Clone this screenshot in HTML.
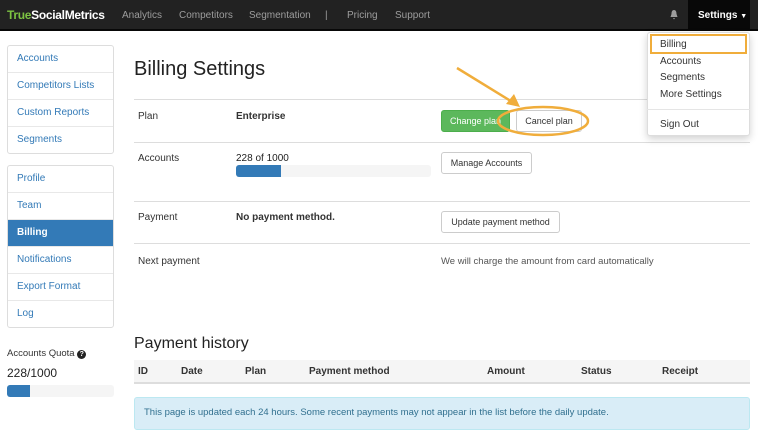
<!DOCTYPE html>
<html><head><meta charset="utf-8"><style>
*{margin:0;padding:0;box-sizing:border-box}
body{width:758px;height:437px;overflow:hidden;background:#fff;font-family:"Liberation Sans",Arial,sans-serif;font-size:10px;color:#333;position:relative}
.a{position:absolute;white-space:nowrap}
.nav{position:absolute;left:0;top:0;width:758px;height:31px;background:#222;border-bottom:2px solid #080808}
.nav .a{color:#9d9d9d;font-size:10px;top:10px}
.sb{position:absolute;left:7px;width:107px;border:1px solid #ddd;border-radius:3px;background:#fff}
.sb div{height:27px;line-height:26px;padding-left:9px;color:#337ab7;border-top:1px solid #e8e8e8;font-size:10px}
.sb div:first-child{border-top:none;height:26px}
.sb .act{background:#337ab7;color:#fff;font-weight:bold}
.hr{position:absolute;left:134px;width:616px;height:1px;background:#ddd}
.btn{position:absolute;height:22px;border:1px solid #ccc;border-radius:3px;background:#fff;display:flex;align-items:center;justify-content:center;white-space:nowrap;font-size:9px;color:#333}
.dd .a{color:#333;font-size:10px;left:660px}
.th{font-weight:bold;top:366px}
</style></head><body>
<div class="nav">
 <div class="a" style="left:7px;top:8px;font-size:12px;font-weight:bold;color:#fff;letter-spacing:-0.3px"><span style="color:#7cc242">True</span>SocialMetrics</div>
 <div class="a" style="left:122px">Analytics</div>
 <div class="a" style="left:179px">Competitors</div>
 <div class="a" style="left:249px">Segmentation</div>
 <div class="a" style="left:325px">|</div>
 <div class="a" style="left:347px">Pricing</div>
 <div class="a" style="left:395px">Support</div>
 <svg class="a" style="left:669px;top:9px" width="10" height="11" viewBox="0 0 10 11"><path d="M5 1C3 1 2.5 3 2.5 5L1.5 8H8.5L7.5 5C7.5 3 7 1 5 1Z M4 9H6L5 10.5Z" fill="#9d9d9d"/></svg>
 <div class="a" style="left:688px;top:0;width:62px;height:31px;background:#080808"></div>
 <div class="a" style="left:698px;top:10px;color:#fff;font-weight:bold">Settings <span style="font-size:7px">▼</span></div>
</div>

<div class="sb" style="top:45px"><div>Accounts</div><div>Competitors Lists</div><div>Custom Reports</div><div>Segments</div></div>
<div class="sb" style="top:165px"><div>Profile</div><div>Team</div><div class="act">Billing</div><div>Notifications</div><div>Export Format</div><div>Log</div></div>

<div class="a" style="left:7px;top:348px;font-size:9.5px">Accounts Quota <span style="display:inline-block;width:9px;height:9px;border-radius:50%;background:#222;color:#fff;font-size:7px;text-align:center;line-height:9px;font-weight:bold">?</span></div>
<div class="a" style="left:7px;top:366px;font-size:12px;color:#222">228/1000</div>
<div class="a" style="left:7px;top:385px;width:107px;height:12px;background:#f5f5f5;border-radius:3px"><div style="width:23px;height:12px;background:#337ab7;border-radius:3px 0 0 3px"></div></div>

<div class="a" style="left:134px;top:58px;font-size:20px;color:#222">Billing Settings</div>
<div class="hr" style="top:99px"></div>
<div class="a" style="left:138px;top:111px">Plan</div>
<div class="a" style="left:236px;top:111px;font-weight:bold">Enterprise</div>
<div class="btn" style="left:441px;top:110px;width:69px;background:#5cb85c;border-color:#4cae4c;color:#fff">Change plan</div>
<div class="btn" style="left:516px;top:110px;width:66px">Cancel plan</div>
<svg class="a" style="left:440px;top:60px" width="160" height="82" viewBox="0 0 160 82"><ellipse cx="103" cy="61" rx="45" ry="14" fill="none" stroke="#f0ad3b" stroke-width="2.5"/><path d="M17 8L74 43" stroke="#f0ad3b" stroke-width="2.5"/><path d="M80 47L66 44L74 34Z" fill="#f0ad3b"/></svg>
<div class="hr" style="top:142px"></div>
<div class="a" style="left:138px;top:153px">Accounts</div>
<div class="a" style="left:236px;top:153px;color:#222">228 of 1000</div>
<div class="a" style="left:236px;top:165px;width:195px;height:12px;background:#f5f5f5;border-radius:3px"><div style="width:45px;height:12px;background:#337ab7;border-radius:3px 0 0 3px"></div></div>
<div class="btn" style="left:441px;top:152px;width:91px">Manage Accounts</div>
<div class="hr" style="top:201px"></div>
<div class="a" style="left:138px;top:212px">Payment</div>
<div class="a" style="left:236px;top:212px;font-weight:bold">No payment method.</div>
<div class="btn" style="left:441px;top:211px;width:119px">Update payment method</div>
<div class="hr" style="top:243px"></div>
<div class="a" style="left:138px;top:256px">Next payment</div>
<div class="a" style="left:441px;top:256px;color:#555;font-size:9.5px">We will charge the amount from card automatically</div>

<div class="a" style="left:134px;top:335px;font-size:16px;color:#222">Payment history</div>
<div class="a" style="left:134px;top:360px;width:616px;height:24px;background:#f5f5f5;border-bottom:2px solid #ddd"></div>
<div class="a th" style="left:138px">ID</div>
<div class="a th" style="left:181px">Date</div>
<div class="a th" style="left:245px">Plan</div>
<div class="a th" style="left:309px">Payment method</div>
<div class="a th" style="left:487px">Amount</div>
<div class="a th" style="left:581px">Status</div>
<div class="a th" style="left:662px">Receipt</div>
<div class="a" style="left:134px;top:397px;width:616px;height:33px;background:#d9edf7;border:1px solid #bce8f1;border-radius:3px"></div>
<div class="a" style="left:144px;top:407px;color:#31708f;font-size:9.5px">This page is updated each 24 hours. Some recent payments may not appear in the list before the daily update.</div>

<div class="dd">
 <div class="a" style="left:647px;top:32px;width:103px;height:104px;background:#fff;border:1px solid #ddd;border-radius:3px;box-shadow:0 3px 8px rgba(0,0,0,.18)"></div>
 <div class="a" style="left:650px;top:34px;width:97px;height:20px;border:2.5px solid #f0ad3b"></div>
 <div class="a" style="top:39px">Billing</div>
 <div class="a" style="top:56px">Accounts</div>
 <div class="a" style="top:72px">Segments</div>
 <div class="a" style="top:89px">More Settings</div>
 <div class="a" style="left:647px;top:109px;width:103px;height:1px;background:#e5e5e5"></div>
 <div class="a" style="top:119px">Sign Out</div>
</div>
</body></html>
